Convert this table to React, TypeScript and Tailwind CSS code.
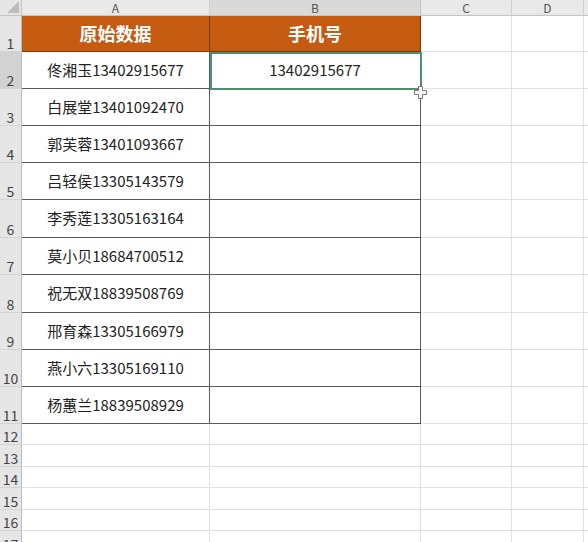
import React from 'react';

const font = { fontFamily: '"Noto Sans CJK SC", "Noto Sans", sans-serif' };

const records = [
  '佟湘玉13402915677',
  '白展堂13401092470',
  '郭芙蓉13401093667',
  '吕轻侯13305143579',
  '李秀莲13305163164',
  '莫小贝18684700512',
  '祝无双18839508769',
  '邢育森13305166979',
  '燕小六13305169110',
  '杨蕙兰18839508929',
];

// heights of rows 1..11 (data block), then the empty rows below
const dataHeights = ['h-[36px]', 'h-[37px]', 'h-[37px]', 'h-[37px]', 'h-[37px]', 'h-[38px]', 'h-[37px]', 'h-[38px]', 'h-[37px]', 'h-[37px]', 'h-[37px]'];
const emptyHeights = ['h-[21px]', 'h-[22px]', 'h-[21px]', 'h-[22px]', 'h-[21px]', 'h-[22px]'];

const RowHead: React.FC<{ n: number; active?: boolean }> = ({ n, active }) => (
  <div
    className={`w-[22px] shrink-0 flex items-end justify-center pb-[1px] text-[14px] leading-none border-r border-b border-r-[#bcbcbc] border-b-[#d4d4d4] text-[#444] ${
      active ? 'bg-[#d2d2d2]' : 'bg-[#e6e6e6]'
    }`}
  >
    {n}
  </div>
);

const LightCells: React.FC = () => (
  <>
    <div className="w-[91px] shrink-0 border-r border-b border-[#e1e1e1]" />
    <div className="w-[72px] shrink-0 border-r border-b border-[#e1e1e1]" />
    <div className="flex-1 border-b border-[#e1e1e1]" />
  </>
);

const colHead = 'shrink-0 border-r border-b border-b-[#c4c4c4] flex items-center justify-center text-[12px] leading-none text-[#555]';

export default function App() {
  return (
    <div className="relative w-[588px] h-[542px] bg-white overflow-hidden" style={font}>
      {/* column headers */}
      <div className="flex h-[16px]">
        <div className="relative w-[22px] shrink-0 bg-[#e6e6e6] border-r border-b border-[#c4c4c4]">
          <svg className="absolute right-[2px] bottom-[2px]" width="12" height="12" viewBox="0 0 12 12">
            <polygon points="12,0 12,12 0,12" fill="#bdbdbd" />
          </svg>
        </div>
        <div className={`w-[188px] bg-[#e9e9e9] border-r-[#d0d0d0] ${colHead}`}>A</div>
        <div className={`w-[211px] bg-[#d9d9d9] border-r-[#c4c4c4] ${colHead}`}>B</div>
        <div className={`w-[91px] bg-[#e9e9e9] border-r-[#d0d0d0] ${colHead}`}>C</div>
        <div className={`w-[72px] bg-[#e9e9e9] border-r-[#d0d0d0] ${colHead}`}>D</div>
        <div className="flex-1 bg-[#e9e9e9] border-b border-[#c4c4c4]" />
      </div>

      {/* row 1: titles */}
      <div className={`flex ${dataHeights[0]}`}>
        <RowHead n={1} />
        <div className="w-[188px] shrink-0 bg-[#c55a11] border-r border-b border-[#7a3a10] flex items-center justify-center text-white font-bold text-[18px]">原始数据</div>
        <div className="w-[211px] shrink-0 bg-[#c55a11] border-r border-b border-[#7a3a10] flex items-center justify-center text-white font-bold text-[18px]">手机号</div>
        <LightCells />
      </div>

      {/* rows 2-11 */}
      {records.map((r, i) => (
        <div key={r} className={`flex ${dataHeights[i + 1]}`}>
          <RowHead n={i + 2} active={i === 0} />
          <div className="w-[188px] shrink-0 border-r border-b border-[#5a5a5a] flex items-center justify-center text-[15px] text-[#222]">{r}</div>
          <div className="w-[211px] shrink-0 border-r border-b border-[#5a5a5a] flex items-center justify-center text-[15px] text-[#222]">
            {i === 0 ? '13402915677' : ''}
          </div>
          <LightCells />
        </div>
      ))}

      {/* empty rows */}
      {emptyHeights.map((h, i) => (
        <div key={h + i} className={`flex ${h}`}>
          <RowHead n={i + 12} />
          <div className="w-[188px] shrink-0 border-r border-b border-[#e1e1e1]" />
          <div className="w-[211px] shrink-0 border-r border-b border-[#e1e1e1]" />
          <LightCells />
        </div>
      ))}

      {/* selection on B2 */}
      <div className="absolute left-[210px] top-[52px] w-[212px] h-[38px] border-2 border-[#4f8f6c] pointer-events-none" />
      <div className="absolute left-[418px] top-[86px] w-[6px] h-[6px] bg-[#2e6b4a] border border-white" />

      {/* crosshair cursor */}
      <svg className="absolute left-[414px] top-[86px]" width="13" height="13" viewBox="0 0 13 13">
        <path d="M4.5 0.5h4v4h4v4h-4v4h-4v-4h-4v-4h4z" fill="#f4f4f4" stroke="#7a7a7a" strokeWidth="1" />
      </svg>
    </div>
  );
}
